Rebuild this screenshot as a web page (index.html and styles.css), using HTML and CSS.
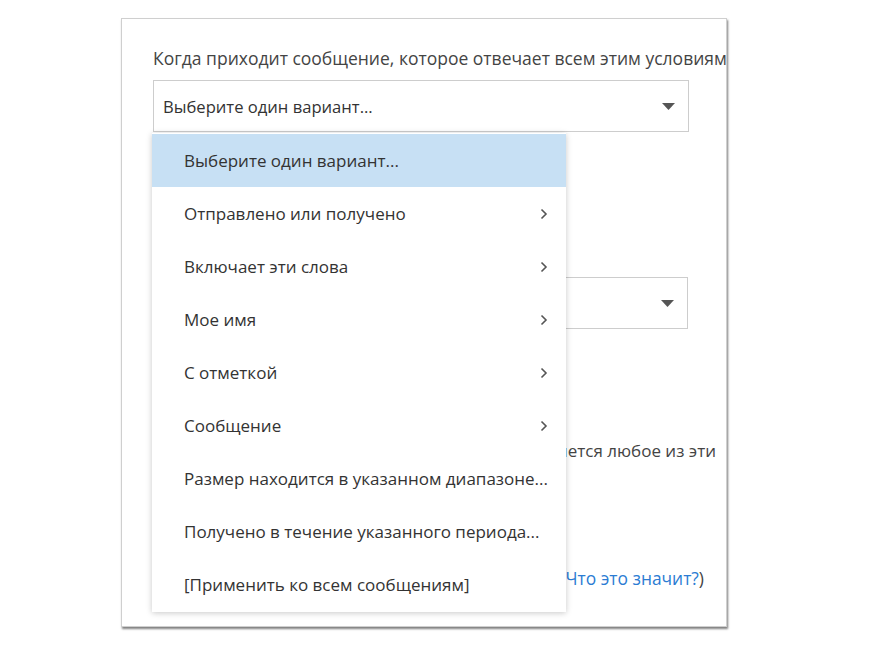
FILE: index.html
```html
<!DOCTYPE html>
<html lang="ru">
<head>
<meta charset="utf-8">
<title>Правило</title>
<link rel="stylesheet" href="styles.css">
</head>
<body>
<div class="panel">
  <div class="heading">Когда приходит сообщение, которое отвечает всем этим условиям</div>
  <div class="select-wrap">
    <div class="select">
      <span class="select-text">Выберите один вариант...</span>
      <svg class="caret" width="13" height="7" viewBox="0 0 13 7"><path d="M0 0H13L6.5 7Z" fill="#555"/></svg>
    </div>
    <ul class="menu">
      <li class="item active">Выберите один вариант...</li>
      <li class="item">Отправлено или получено<svg class="chev" width="8" height="12" viewBox="0 0 8 12"><path d="M1.5 1.5L6 6L1.5 10.5" fill="none" stroke="#555" stroke-width="1.6"/></svg></li>
      <li class="item">Включает эти слова<svg class="chev" width="8" height="12" viewBox="0 0 8 12"><path d="M1.5 1.5L6 6L1.5 10.5" fill="none" stroke="#555" stroke-width="1.6"/></svg></li>
      <li class="item">Мое имя<svg class="chev" width="8" height="12" viewBox="0 0 8 12"><path d="M1.5 1.5L6 6L1.5 10.5" fill="none" stroke="#555" stroke-width="1.6"/></svg></li>
      <li class="item">С отметкой<svg class="chev" width="8" height="12" viewBox="0 0 8 12"><path d="M1.5 1.5L6 6L1.5 10.5" fill="none" stroke="#555" stroke-width="1.6"/></svg></li>
      <li class="item">Сообщение<svg class="chev" width="8" height="12" viewBox="0 0 8 12"><path d="M1.5 1.5L6 6L1.5 10.5" fill="none" stroke="#555" stroke-width="1.6"/></svg></li>
      <li class="item">Размер находится в указанном диапазоне...</li>
      <li class="item">Получено в течение указанного периода...</li>
      <li class="item">[Применить ко всем сообщениям]</li>
    </ul>
  </div>
  <div class="select second">
    <span class="select-text"></span>
    <svg class="caret" width="13" height="7" viewBox="0 0 13 7"><path d="M0 0H13L6.5 7Z" fill="#555"/></svg>
  </div>
  <div class="except">Кроме случаев, когда применяется любое из эти</div>
  <div class="more">(<a class="link" href="#">Что это значит?</a>)</div>
</div>
</body>
</html>
```
FILE: styles.css
```css
html, body {
  margin: 0;
  padding: 0;
  background: #fff;
}
body {
  font-family: "Open Sans", "Noto Sans", sans-serif;
  color: #333;
  width: 870px;
  height: 654px;
  overflow: hidden;
}
.panel {
  margin: 18px 0 0 121px;
  width: 606px;
  height: 609px;
  border: 1px solid #cfcfcf;
  box-shadow: 1px 2px 2px rgba(0, 0, 0, 0.5);
  box-sizing: border-box;
  padding: 28px 0 0 31px;
  overflow: hidden;
  display: flex;
  flex-direction: column;
}
.heading {
  font-size: 17.5px;
  line-height: 22px;
  color: #444;
  white-space: nowrap;
  height: 22px;
}
.select-wrap {
  position: relative;
  margin-top: 11px;
}
.select {
  width: 536px;
  height: 52px;
  box-sizing: border-box;
  border: 1px solid #cdcdcd;
  background: #fff;
  display: flex;
  align-items: center;
  justify-content: space-between;
  padding: 0 13px 0 9px;
  font-size: 16.6px;
  color: #333;
}
.caret {
  display: block;
}
.menu {
  position: absolute;
  left: -1px;
  top: 53px;
  width: 414px;
  margin: 0;
  padding: 1px 0;
  list-style: none;
  background: #fff;
  box-shadow: 0 1px 6px rgba(0, 0, 0, 0.22);
  z-index: 5;
}
.item {
  height: 53px;
  display: flex;
  align-items: center;
  justify-content: space-between;
  padding: 0 18px 0 32px;
  font-size: 17px;
  color: #333;
  white-space: nowrap;
}
.item.active {
  background: #c7e0f4;
}
.chev {
  display: block;
}
.select.second {
  margin-top: 145px;
  width: 535px;
}
.except {
  margin-top: 111px;
  width: 563px;
  text-align: right;
  white-space: nowrap;
  font-size: 17px;
  line-height: 22px;
  color: #444;
}
.more {
  margin-top: 105px;
  width: 551px;
  text-align: right;
  white-space: nowrap;
  font-size: 17.4px;
  line-height: 22px;
  color: #444;
}
.link {
  color: #2b7cd3;
  text-decoration: none;
}
```
